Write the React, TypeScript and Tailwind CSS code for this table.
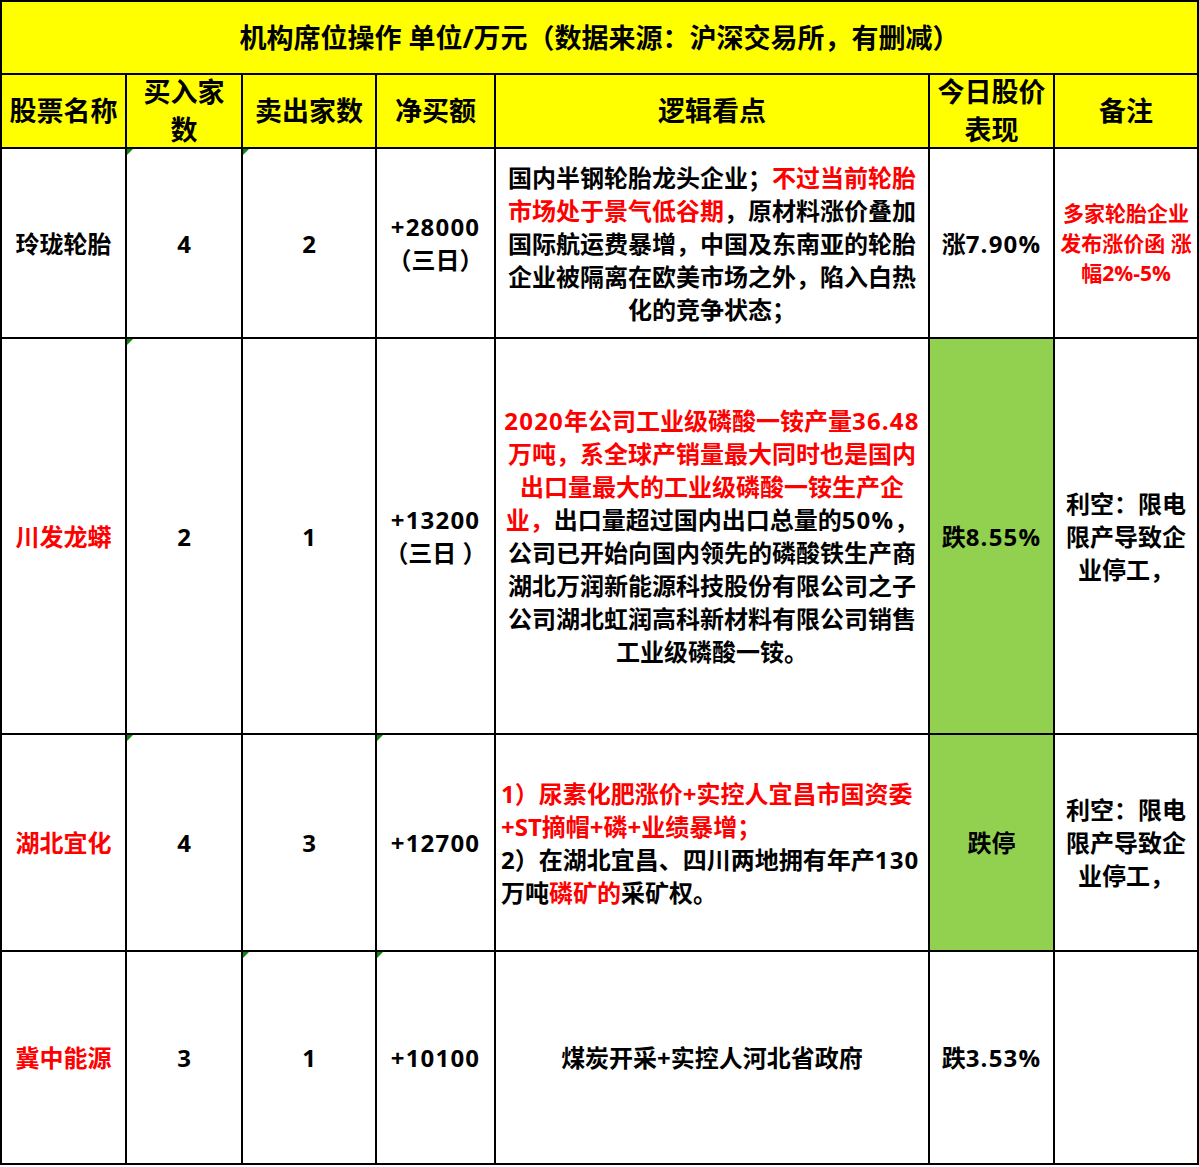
import React from "react";

const R = ({ children }: { children: React.ReactNode }) => (
  <span className="text-[#ff0000]">{children}</span>
);

const N = ({ children }: { children: React.ReactNode }) => (
  <span className="tracking-[1.2px]">{children}</span>
);

const Tri = () => (
  <div className="absolute left-0 top-0 w-0 h-0 border-t-[6px] border-r-[6px] border-t-[#0b8a0b] border-r-transparent" />
);

export default function App() {
  const cell = "relative border-2 border-black text-center align-middle p-0";
  return (
    <div
      className="w-[1199px] h-[1167px] bg-white font-bold text-black overflow-hidden"
      style={{ fontFamily: '"Open Sans", "Noto Sans CJK SC", sans-serif' }}
    >
      <table className="table-fixed border-collapse w-[1197px] text-[24px] leading-[33px]">
        <colgroup>
          <col className="w-[125px]" />
          <col className="w-[116px]" />
          <col className="w-[134px]" />
          <col className="w-[119px]" />
          <col className="w-[434px]" />
          <col className="w-[125px]" />
          <col className="w-[144px]" />
        </colgroup>
        <tbody>
          <tr className="h-[73px] bg-[#ffff00]">
            <td colSpan={7} className={`${cell} text-[27px]`}>
              机构席位操作 单位/万元（数据来源：沪深交易所，有删减）
            </td>
          </tr>
          <tr className="h-[74px] bg-[#ffff00] text-[27px] leading-[36px]">
            <td className={cell}>股票名称</td>
            <td className={cell}>
              <div className="h-[70px] flex flex-col items-center justify-center leading-[38px]">
                <div>买入家</div>
                <div>数</div>
              </div>
            </td>
            <td className={cell}>卖出家数</td>
            <td className={cell}>净买额</td>
            <td className={cell}>逻辑看点</td>
            <td className={cell}>
              <div className="h-[70px] flex flex-col items-center justify-center leading-[38px]">
                <div>今日股价</div>
                <div>表现</div>
              </div>
            </td>
            <td className={cell}>备注</td>
          </tr>
          <tr className="h-[190px]">
            <td className={cell}>玲珑轮胎</td>
            <td className={cell}>
              <Tri />4
            </td>
            <td className={cell}>
              <Tri />2
            </td>
            <td className={cell}>
              <N>+28000</N>
              <br />
              （三日）
            </td>
            <td className={cell}>
              国内半钢轮胎龙头企业；<R>不过当前轮胎</R>
              <br />
              <R>市场处于景气低谷期</R>，原材料涨价叠加
              <br />
              国际航运费暴增，中国及东南亚的轮胎
              <br />
              企业被隔离在欧美市场之外，陷入白热
              <br />
              化的竞争状态；
            </td>
            <td className={cell}>
              涨<N>7.90%</N>
            </td>
            <td className={`${cell} text-[21px] leading-[30px] text-[#ff0000]`}>
              多家轮胎企业
              <br />
              发布涨价函 涨
              <br />
              幅2%-5%
            </td>
          </tr>
          <tr className="h-[396px]">
            <td className={`${cell} text-[#ff0000]`}>川发龙蟒</td>
            <td className={cell}>
              <Tri />2
            </td>
            <td className={cell}>1</td>
            <td className={cell}>
              <N>+13200</N>
              <br />
              （三日 ）
            </td>
            <td className={cell}>
              <R>
                <N>2020</N>年公司工业级磷酸一铵产量<N>36.48</N>
              </R>
              <br />
              <R>万吨，系全球产销量最大同时也是国内</R>
              <br />
              <R>出口量最大的工业级磷酸一铵生产企</R>
              <br />
              <R>业，</R>出口量超过国内出口总量的<N>50%</N>，
              <br />
              公司已开始向国内领先的磷酸铁生产商
              <br />
              湖北万润新能源科技股份有限公司之子
              <br />
              公司湖北虹润高科新材料有限公司销售
              <br />
              工业级磷酸一铵。
            </td>
            <td className={`${cell} bg-[#92d050]`}>
              跌<N>8.55%</N>
            </td>
            <td className={cell}>
              利空：限电
              <br />
              限产导致企
              <br />
              业停工，
            </td>
          </tr>
          <tr className="h-[217px]">
            <td className={`${cell} text-[#ff0000]`}>湖北宜化</td>
            <td className={cell}>
              <Tri />4
            </td>
            <td className={cell}>3</td>
            <td className={cell}>
              <Tri />
              <N>+12700</N>
            </td>
            <td className={`${cell} !text-left pl-[5px]`}>
              <R>1）尿素化肥涨价+实控人宜昌市国资委</R>
              <br />
              <R>+ST摘帽+磷+业绩暴增；</R>
              <br />
              2）在湖北宜昌、四川两地拥有年产<N>130</N>
              <br />
              万吨<R>磷矿的</R>采矿权。
            </td>
            <td className={`${cell} bg-[#92d050]`}>跌停</td>
            <td className={cell}>
              利空：限电
              <br />
              限产导致企
              <br />
              业停工，
            </td>
          </tr>
          <tr className="h-[213px]">
            <td className={`${cell} text-[#ff0000]`}>冀中能源</td>
            <td className={cell}>3</td>
            <td className={cell}>
              <Tri />1
            </td>
            <td className={cell}>
              <Tri />
              <N>+10100</N>
            </td>
            <td className={cell}>煤炭开采+实控人河北省政府</td>
            <td className={cell}>
              跌<N>3.53%</N>
            </td>
            <td className={cell}></td>
          </tr>
        </tbody>
      </table>
    </div>
  );
}
